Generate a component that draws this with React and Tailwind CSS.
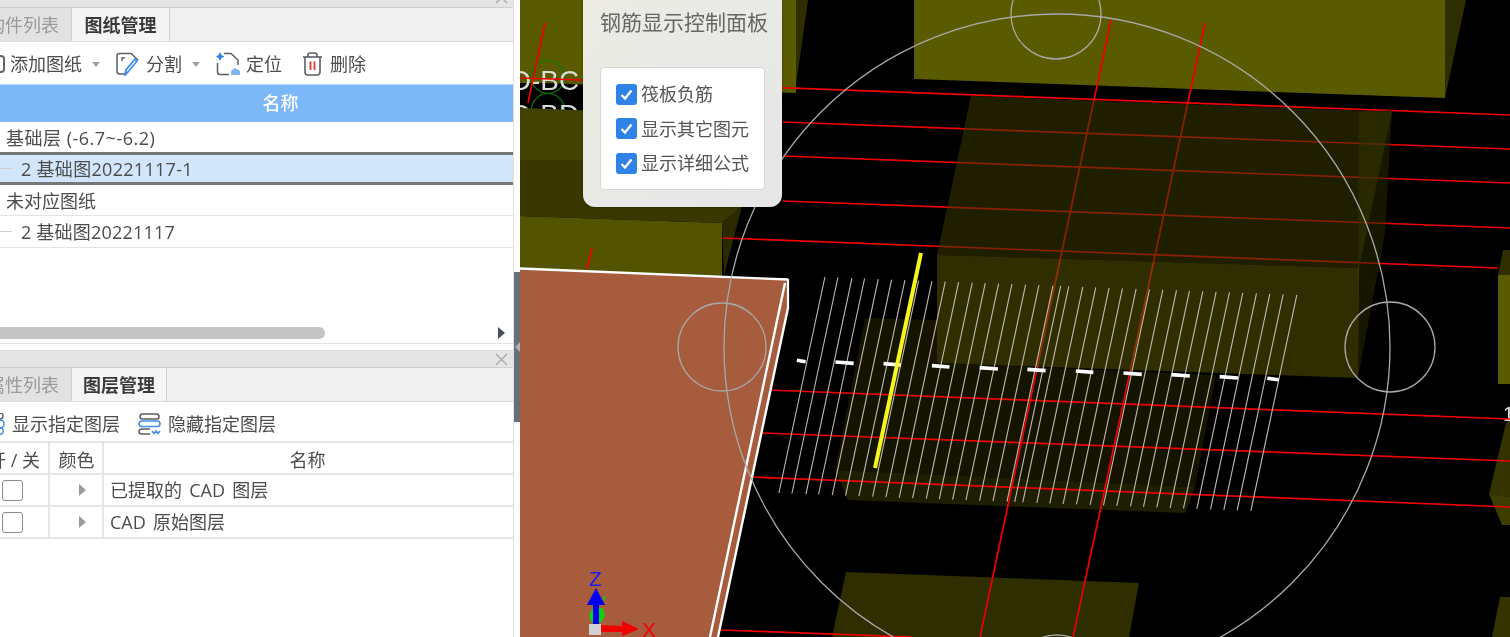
import React from "react";

const rebarTops = [185,222,262,298,337,375,413,452,490,528,566,605,642,680,718,757,795,835,857,880,920,957,995,1033,1072,1110,1148,1187,1224,1262,1300,1338,1376,1415,1453,1491,1530];
const dashes = [[105,130,363],[215,267,368],[352,402,373],[490,540,379],[626,678,385],[762,814,390],[900,950,395],[1036,1088,401],[1173,1225,406],[1310,1362,412],[1446,1478,417]];
const reds = [
  [520,78,1510,115],[783,122,1510,149],[783,156,1510,183],[783,201,1510,228],[723,238,1498,268],
  [768,390,1510,419],[762,433,1510,461],[752,477,1510,507],[720,630,912,637],
  [1111,20,980,637],[1205,23,1073,637],[592,248,587,269],
];

function Scene() {
  return (
    <svg viewBox="520 0 990 637" className="block h-full w-full">
      <rect x="520" y="0" width="990" height="637" fill="#000" />
      {/* bright blocks */}
      <polygon points="796,0 808,0 796,85" fill="#2e2e00" />
      <rect x="582" y="0" width="214" height="82" fill="#5a5a00" />
      <polygon points="520,82 796,82 796,93" fill="#5a5a00" />
      <polygon points="1445,0 1466,0 1445,98" fill="#2e2e00" />
      <polygon points="914,0 1445,0 1445,98 914,79" fill="#5a5a00" />
      {/* far right blocks */}
      <polygon points="1503,250 1510,250 1510,275 1498,275" fill="#2e2e00" />
      <rect x="1498" y="275" width="12" height="109" fill="#5a5a00" />
      <polygon points="1505,427 1510,415 1510,497 1489,494" fill="#333300" />
      <polygon points="1489,494 1510,497 1510,525 1502,525" fill="#3d3d00" />
      <polygon points="1500,597 1510,597 1510,637 1492,637" fill="#333300" />
      {/* lower blocks */}
      <polygon points="865,318 937,320 937,363 1216,375 1195,487 835,470" fill="#141400" />
      <polygon points="835,470 1195,487 1185,513 848,500" fill="#1e1e00" />
      <polygon points="846,572 1139,583 1129,637 832,637" fill="#2e2e00" />
      <text x="1503" y="421" fontSize="20" fill="#e0e0e0" fontFamily="'Liberation Sans', sans-serif">1</text>
      {/* left blocks */}
      <polygon points="520,216 722,223 722,280 520,280" fill="#545400" />
      <polygon points="722,223 742,206 724,276" fill="#2a2a00" />
      {/* red lines */}
      {reds.map(([a, b, c, d], i) => (
        <line key={i} x1={a} y1={b} x2={c} y2={d} stroke="#f00000" strokeWidth="1.7" />
      ))}
      {/* translucent upper blocks */}
      <polygon points="1392,110 1385,233 1358,378 1358,268 1359,112" fill="#2a2a00" fillOpacity="0.55" />
      <polygon points="971,96 1392,112 1359,268 937,255" fill="#383800" fillOpacity="0.55" />
      <polygon points="937,255 1359,268 1358,378 937,363" fill="#545400" fillOpacity="0.55" />
      {/* brown plate */}
      <polygon points="520,268 788,279 788,308 718,637 520,637" fill="#a85c3e" />
      <line x1="520" y1="268.5" x2="788" y2="279.5" stroke="#fff" strokeWidth="2.4" />
      <line x1="788" y1="279" x2="788" y2="308" stroke="#fff" strokeWidth="2.2" />
      <line x1="788" y1="308" x2="718" y2="637" stroke="#fff" strokeWidth="2.4" />
      <line x1="785" y1="283" x2="710" y2="637" stroke="#fff" strokeWidth="2.4" />
      {/* circles */}
      <circle cx="1057" cy="347" r="333" fill="none" stroke="#a8a8a8" strokeWidth="1.3" />
      <circle cx="1390" cy="347" r="45" fill="none" stroke="#a8a8a8" strokeWidth="1.3" />
      <circle cx="722" cy="347" r="44" fill="none" stroke="#a8a8a8" strokeWidth="1.3" />
      <circle cx="1056" cy="14" r="45" fill="none" stroke="#a8a8a8" strokeWidth="1.3" />
      <circle cx="1057" cy="680" r="45" fill="none" stroke="#a8a8a8" strokeWidth="1.3" />
      {/* rebars */}
      {rebarTops.map((t, i) => {
        const x = 760 + t / 2.85;
        const y = 277 + (x - 825) * 0.0381;
        return <line key={i} x1={x} y1={y} x2={x - 46} y2={y + 216} stroke="#c4b9b1" strokeWidth="1.1" />;
      })}
      {dashes.map(([a, b, y], i) => (
        <line key={i} x1={760 + a / 2.85} y1={240 + (y - 2) / 3} x2={760 + b / 2.85} y2={240 + (y + 2) / 3} stroke="#fff" strokeWidth="3.6" />
      ))}
      <line x1="921" y1="253" x2="875" y2="468" stroke="#f6f61e" strokeWidth="4" />
      {/* axis gizmo */}
      <path d="M594 608 C588 612 588 620 593 623 L600 623 C606 618 606 612 602 608 Z" fill="#10d010" />
      <path d="M603 597 L606 596 L604 602 Z" fill="#10d010" />
      <rect x="593" y="602" width="6" height="23" fill="#0000f0" />
      <polygon points="596,588 587,605 605,605" fill="#0000f0" />
      <text x="589" y="586" fontSize="21" fill="#1a1af0" fontFamily="'Liberation Sans', sans-serif">Z</text>
      <polygon points="601,625 622,626 622,621 639,629 622,636 622,632 601,632" fill="#f00000" />
      <rect x="589" y="624" width="12" height="11" fill="#d0d0d0" />
      <text x="642" y="637" fontSize="21" fill="#f00000" fontFamily="'Liberation Sans', sans-serif">X</text>
      {/* top-left corner of the model, drawn last */}
      <rect x="520" y="0" width="63" height="83" fill="#5a5a00" />
      <circle cx="548" cy="77" r="16.5" fill="none" stroke="#0a7a0a" strokeWidth="1.2" />
      <circle cx="548" cy="110" r="16.5" fill="none" stroke="#0a7a0a" strokeWidth="1.2" />
      <text x="511" y="90" fontSize="28" fill="#dcdcdc" fontFamily="'Liberation Sans', sans-serif" textLength="68" lengthAdjust="spacingAndGlyphs">D-BC</text>
      <text x="511" y="124" fontSize="28" fill="#dcdcdc" fontFamily="'Liberation Sans', sans-serif" textLength="68" lengthAdjust="spacingAndGlyphs">D-BD</text>
      <line x1="520" y1="78" x2="583" y2="80" stroke="#f00000" strokeWidth="1.7" />
      <line x1="545" y1="23" x2="528" y2="103" stroke="#f00000" strokeWidth="1.7" />
      <polygon points="520,108 745,116 745,160 520,160" fill="#424200" />
      <polygon points="520,160 745,160 742,206 722,223 520,216" fill="#383800" />
    </svg>
  );
}

function Check() {
  return (
    <span className="flex h-[21px] w-[21px] shrink-0 items-center justify-center rounded-[3px] bg-[#2f82e6]">
      <svg width="15" height="15" viewBox="0 0 15 15">
        <path d="M2.5 8 L6 11.5 L12.5 3.5" fill="none" stroke="#fff" strokeWidth="2.4" />
      </svg>
    </span>
  );
}

function Caret() {
  return (
    <svg width="8" height="5" viewBox="0 0 8 5" className="shrink-0">
      <path d="M0 0 H8 L4 5 Z" fill="#a0a0a0" />
    </svg>
  );
}

function Tabs({ first, second, firstW, secondW }) {
  return (
    <div className="flex h-[34px] shrink-0 border-b border-[#dcdcdc] bg-[#f0f0f0]">
      <div className={`flex items-center overflow-hidden bg-[#e2e2e2] text-[#9a9a9a] ${firstW}`}>
        <span className="-ml-[13px] whitespace-nowrap">{first}</span>
      </div>
      <div className={`flex items-center justify-center border-x border-[#cfcfcf] bg-[#f5f5f5] font-semibold text-[#3a3a3a] ${secondW}`}>
        {second}
      </div>
    </div>
  );
}

function CloseX({ className }) {
  return (
    <svg width="13" height="13" viewBox="0 0 13 13" className={className}>
      <path d="M1 1 L12 12 M12 1 L1 12" stroke="#a8a8a8" strokeWidth="1.3" />
    </svg>
  );
}

function TreeRow({ level, text, selected, extra }) {
  return (
    <div className={`flex h-full items-center ${selected ? "bg-[#d2e6fb]" : "bg-white"} ${extra || ""}`}>
      {level === 1 ? <span className="mr-[9px] h-px w-[12px] bg-[#d0d0d0]" /> : <span className="w-[6px]" />}
      <span className="whitespace-nowrap">{text}</span>
    </div>
  );
}

function LayerRow({ text }) {
  return (
    <div className="grid h-[32px] shrink-0 grid-cols-[50px_54px_1fr] border-b-2 border-[#e6e6e6]">
      <div className="flex items-center border-r-2 border-[#e6e6e6] pl-[2px]">
        <span className="h-[21px] w-[21px] rounded-[3px] border border-[#8a8a8a] bg-white" />
      </div>
      <div className="flex items-center justify-center border-r-2 border-[#e6e6e6] pl-[12px]">
        <svg width="7" height="12" viewBox="0 0 7 12"><path d="M0 0 L7 6 L0 12 Z" fill="#9a9a9a" /></svg>
      </div>
      <div className="flex items-center whitespace-nowrap pl-[6px] [word-spacing:2.5px]">{text}</div>
    </div>
  );
}

export default function App() {
  return (
    <div className="flex h-[637px] w-[1510px] overflow-hidden bg-white font-['Open_Sans','Noto_Sans_CJK_SC',sans-serif] text-[18px] leading-none text-[#4c4c4c] blur-[0.5px]">
      {/* left column */}
      <div className="flex w-[514px] shrink-0 flex-col overflow-hidden border-r border-[#e0e0e0]">
        <div className="relative h-[8px] shrink-0 overflow-hidden border-b border-[#cfcfcf] bg-[#e5e5e5]">
          <CloseX className="absolute right-[5px] top-[-9px]" />
        </div>
        <Tabs first="构件列表" second="图纸管理" firstW="w-[71px]" secondW="w-[99px]" />
        {/* toolbar */}
        <div className="flex h-[42px] shrink-0 items-center pt-[2px]">
          <span className="-ml-[14px] h-[18px] w-[19px] rounded-[4px] border-2 border-[#666]" />
          <span className="ml-[5px]">添加图纸</span>
          <span className="ml-[10px] flex"><Caret /></span>
          <svg width="24" height="24" viewBox="0 0 24 24" className="ml-[16px]">
            <path d="M9 22 H3.5 Q1 22 1 19.5 V4 Q1 1.5 3.5 1.5 H15 L22 8" fill="none" stroke="#5a5f66" strokeWidth="1.5" />
            <path d="M6 9 V6 H9" fill="none" stroke="#5a5f66" strokeWidth="1.5" />
            <path d="M21 9 L12 20 L9 23 L10 18 L19 7 Z" fill="none" stroke="#3f8fe6" strokeWidth="1.8" />
          </svg>
          <span className="ml-[6px]">分割</span>
          <span className="ml-[10px] flex"><Caret /></span>
          <svg width="25" height="24" viewBox="0 0 25 24" className="ml-[16px]">
            <path d="M8 1.5 H15 L22 8 V13" fill="none" stroke="#5a5f66" strokeWidth="1.5" />
            <path d="M1.5 11 V20 Q1.5 22.5 4 22.5 H13" fill="none" stroke="#5a5f66" strokeWidth="1.5" />
            <path d="M4 0 L5.5 3 L8.5 4.5 L5.5 6 L4 9 L2.5 6 L0 4.5 L2.5 3 Z" fill="#2f82e6" />
            <path d="M15 19 L19 16 L24 19 V23 H15 Z" fill="#7db4ee" />
          </svg>
          <span className="ml-[5px]">定位</span>
          <svg width="21" height="24" viewBox="0 0 21 24" className="ml-[20px]">
            <path d="M3 5 V20 Q3 23 6 23 H15 Q18 23 18 20 V5" fill="none" stroke="#5a5f66" strokeWidth="1.6" />
            <path d="M1 5 H20" stroke="#5a5f66" strokeWidth="1.6" />
            <path d="M6 5 V3 Q6 1 8 1 H13 Q15 1 15 3 V5" fill="none" stroke="#5a5f66" strokeWidth="1.6" />
            <path d="M8.5 9.5 V18 M12.5 9.5 V18" stroke="#e8343a" strokeWidth="1.8" />
          </svg>
          <span className="ml-[7px]">删除</span>
        </div>
        {/* tree table */}
        <div className="flex h-[38px] shrink-0 items-center justify-center border-t border-[#b9d8fb] bg-[#7cb8f8] pb-[2px] pl-[48px] font-medium text-white">名称</div>
        <div className="h-[30px] shrink-0"><TreeRow level={0} text="基础层 (-6.7~-6.2)" extra="pt-[2px] tracking-[0.5px]" /></div>
        <div className="h-[33px] shrink-0 border-y-[3px] border-[#777]"><TreeRow level={1} text="2 基础图20221117-1" selected extra="tracking-[0.3px]" /></div>
        <div className="h-[31px] shrink-0 border-b border-[#e4e4e4]"><TreeRow level={0} text="未对应图纸" extra="pt-[2px]" /></div>
        <div className="h-[32px] shrink-0 border-b border-[#e4e4e4]"><TreeRow level={1} text="2 基础图20221117" extra="tracking-[0.2px]" /></div>
        {/* scroll area */}
        <div className="flex h-[95px] shrink-0 flex-col justify-end">
          <div className="mb-[4px] flex h-[13px] shrink-0 items-center justify-between pr-[8px]">
            <span className="h-[12px] w-[325px] rounded-r-full bg-[#c4c4c4]" />
            <svg width="7" height="12" viewBox="0 0 7 12"><path d="M0 0 L7 6 L0 12 Z" fill="#4a5058" /></svg>
          </div>
        </div>
        <div className="h-[7px] shrink-0 border-t border-[#e2e2e2]" />
        {/* second pane */}
        <div className="flex h-[18px] shrink-0 items-center justify-end border-b border-t border-b-[#cfcfcf] border-t-[#dcdcdc] bg-[#e5e5e5] pr-[5px]">
          <CloseX />
        </div>
        <Tabs first="属性列表" second="图层管理" firstW="w-[71px]" secondW="w-[96px]" />
        <div className="flex h-[41px] shrink-0 items-center border-b-2 border-[#e6e6e6] pt-[4px]">
          <svg width="6" height="22" viewBox="0 0 6 22" className="shrink-0">
            <circle cx="0" cy="3" r="3" fill="none" stroke="#5a5f66" strokeWidth="1.4" />
            <circle cx="0" cy="11" r="4" fill="none" stroke="#3f8fe6" strokeWidth="1.6" />
            <circle cx="0" cy="18" r="3.2" fill="none" stroke="#3f8fe6" strokeWidth="1.4" />
          </svg>
          <span className="ml-[6px]">显示指定图层</span>
          <svg width="23" height="22" viewBox="0 0 23 22" className="ml-[18px] shrink-0">
            <rect x="2" y="1" width="19" height="5" rx="2.5" fill="none" stroke="#5a5f66" strokeWidth="1.5" />
            <rect x="1" y="8" width="21" height="5.5" rx="2.7" fill="none" stroke="#3f8fe6" strokeWidth="1.6" />
            <path d="M12 16 H4 Q1 16 1 18.5 Q1 21 4 21 H12" fill="none" stroke="#5a5f66" strokeWidth="1.5" />
            <path d="M14 18 L16 20.5 L18 18 L20 20.5 L22 18" fill="none" stroke="#3f8fe6" strokeWidth="1.5" />
          </svg>
          <span className="ml-[7px]">隐藏指定图层</span>
        </div>
        <div className="grid h-[32px] shrink-0 grid-cols-[50px_54px_1fr] border-b-2 border-[#e6e6e6]">
          <div className="flex items-center justify-end overflow-hidden whitespace-nowrap border-r-2 border-[#e6e6e6] pr-[8px] pt-[4px]">开 / 关</div>
          <div className="flex items-center justify-center border-r-2 border-[#e6e6e6] pl-[1px] pt-[4px]">颜色</div>
          <div className="flex items-center justify-center pr-[2px] pt-[4px]">名称</div>
        </div>
        <LayerRow text="已提取的 CAD 图层" />
        <LayerRow text="CAD 原始图层" />
      </div>
      {/* splitter */}
      <div className="flex w-[6px] shrink-0 flex-col bg-white pt-[272px]">
        <div className="flex h-[150px] w-full items-center justify-center bg-[#66707c]">
          <svg width="5" height="10" viewBox="0 0 5 10"><path d="M5 0 V10 L0 5 Z" fill="#aab2ba" /></svg>
        </div>
      </div>
      {/* viewport */}
      <div className="relative min-w-0 flex-1 overflow-hidden">
        <Scene />
        <div className="absolute left-[63px] top-[-12px] flex h-[219px] w-[199px] flex-col rounded-[12px] bg-gradient-to-br from-[#ecece4] to-[#e6e6e8] px-[17px] pt-[23px] shadow-[0_0_2px_rgba(0,0,0,0.5)]">
          <div className="whitespace-nowrap text-center font-['Noto_Sans_CJK_SC',sans-serif] text-[21px] text-[#666]">钢筋显示控制面板</div>
          <div className="mt-[35px] flex h-[123px] w-[165px] flex-col justify-center gap-[13.5px] rounded-[4px] border border-[#d8d8d8] bg-white pl-[15px]">
            {["筏板负筋", "显示其它图元", "显示详细公式"].map((t) => (
              <div key={t} className="flex items-center gap-[4px] whitespace-nowrap text-[#555]">
                <Check />
                <span>{t}</span>
              </div>
            ))}
          </div>
        </div>
      </div>
    </div>
  );
}
